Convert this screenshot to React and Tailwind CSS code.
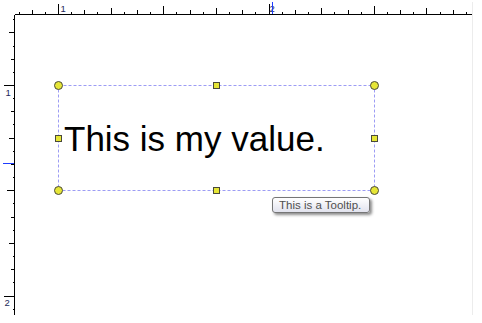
import React from "react";

const mod16 = (k) => ((k % 16) + 16) % 16;

function TopRuler() {
  const ticks = [];
  for (let k = -3; k <= 31; k++) {
    const x = Math.round(58 + 13.16 * k);
    const m = mod16(k);
    const h = m === 0 ? 10 : m === 8 ? 8 : m % 4 === 0 ? 6 : m % 2 === 0 ? 4 : 2;
    ticks.push(<rect key={k} x={x} y={14 - h} width="1" height={h} fill="#000" />);
  }
  return (
    <svg width="482" height="15" className="block shrink-0">
      <rect x="15" y="14" width="457" height="1" fill="#000" />
      {ticks}
      <text x="60.5" y="11.5" fontSize="9.5" fill="#1c2a5a" fontFamily="Liberation Sans, Arial, sans-serif">1</text>
      <text x="269.5" y="11.5" fontSize="9.5" fill="#1c2a5a" fontFamily="Liberation Sans, Arial, sans-serif">2</text>
      <rect x="272" y="2" width="1" height="12" fill="#1e3cff" />
      <rect x="472" y="2" width="1" height="13" fill="#ececec" />
    </svg>
  );
}

function LeftRuler() {
  const ticks = [];
  for (let k = -5; k <= 17; k++) {
    const y = Math.round(85 + 13.16 * k) - 15;
    const m = mod16(k);
    const w = m === 0 ? 10 : m === 8 ? 7 : m % 4 === 0 ? 5 : m % 2 === 0 ? 3 : 1;
    ticks.push(<rect key={k} x={14 - w} y={y} width={w} height="1" fill="#000" />);
  }
  return (
    <svg width="15" height="300" className="block shrink-0">
      <rect x="14" y="0" width="1" height="300" fill="#000" />
      {ticks}
      <text x="5.5" y="80.5" fontSize="9.5" fill="#1c2a5a" fontFamily="Liberation Sans, Arial, sans-serif">1</text>
      <text x="4.5" y="290.5" fontSize="9.5" fill="#1c2a5a" fontFamily="Liberation Sans, Arial, sans-serif">2</text>
      <rect x="3" y="148" width="11" height="1" fill="#1e3cff" />
    </svg>
  );
}

function Adorner() {
  const yellow = "#e6e636";
  const stroke = "#4a4a3a";
  const circles = [
    [43.5, 70.5],
    [359.5, 70.5],
    [43.5, 175.5],
    [359.5, 175.5],
  ];
  const squares = [
    [201.5, 70.5],
    [201.5, 175.5],
    [43.5, 123.5],
    [359.5, 123.5],
  ];
  return (
    <svg width="458" height="300" className="absolute left-0 top-0 pointer-events-none">
      <rect x="43.5" y="70.5" width="316" height="105" fill="none" stroke="#9c9cf4" strokeWidth="1" strokeDasharray="3 2" />
      {circles.map(([cx, cy], i) => (
        <circle key={i} cx={cx} cy={cy} r="4" fill={yellow} stroke={stroke} strokeWidth="1" />
      ))}
      {squares.map(([cx, cy], i) => (
        <rect key={i} x={cx - 3} y={cy - 3} width="6" height="6" fill={yellow} stroke={stroke} strokeWidth="1" />
      ))}
    </svg>
  );
}

export default function App() {
  return (
    <div className="w-[482px] h-[323px] bg-white overflow-hidden flex flex-col font-['Liberation_Sans',Arial,sans-serif]">
      <TopRuler />
      <div className="flex h-[300px] shrink-0">
        <LeftRuler />
        <div className="relative w-[458px] h-[300px] border-r border-[#ececec]">
          <div className="absolute left-[49px] top-[106px] text-[35px] leading-none text-black whitespace-nowrap">
            This is my value.
          </div>
          <Adorner />
          <div className="absolute left-[257px] top-[182px] w-[98px] h-[16px] border border-[#767676] rounded-[3px] bg-gradient-to-b from-white to-[#e2e3ee] shadow-[2px_2px_3px_rgba(0,0,0,0.45)] pl-[6px] text-[11.5px] leading-[14px] text-[#4f4f4f] whitespace-nowrap">
            This is a Tooltip.
          </div>
        </div>
      </div>
    </div>
  );
}
